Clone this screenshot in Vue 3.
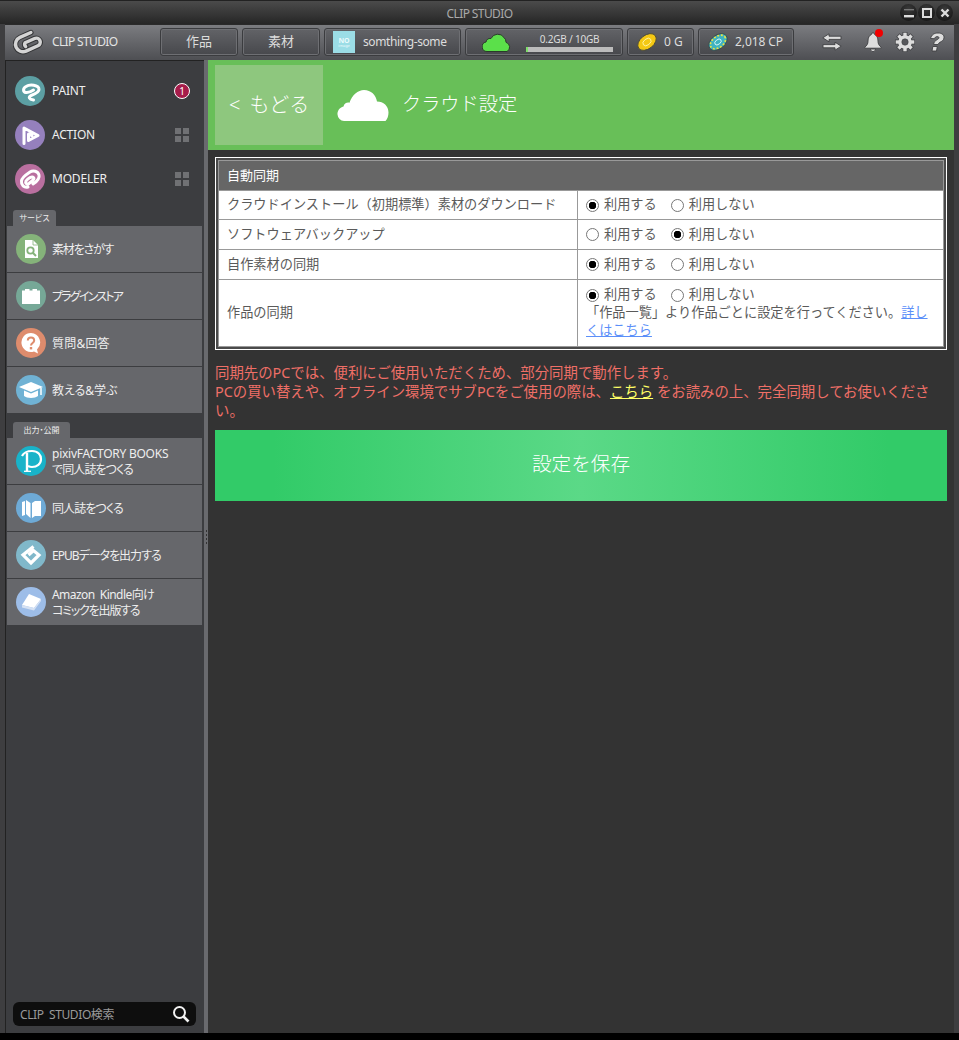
<script setup>
const apps = [
  { id: 'paint', name: 'PAINT', color: '#5c9fa3', badge: true },
  { id: 'action', name: 'ACTION', color: '#9580bd' },
  { id: 'modeler', name: 'MODELER', color: '#b96f9f' }
]
const services = [
  { id: 'find', color: '#85b37a', lines: [{ t: '素材をさがす', c: 'ls-12' }] },
  { id: 'plugin', color: '#76a897', lines: [{ t: 'プラグインストア', c: 'ls-18' }] },
  { id: 'qa', color: '#de8c6d', lines: [{ t: '質問&回答', c: 'ls-p' }] },
  { id: 'learn', color: '#70b2d4', lines: [{ t: '教える&学ぶ', c: 'ls-0' }] }
]
const outputs = [
  { id: 'pixiv', color: '#19b3c9', lines: [{ t: 'pixivFACTORY BOOKS', c: 'ls-2' }, { t: 'で同人誌をつくる', c: 'ls-9' }] },
  { id: 'book', color: '#6eaad6', lines: [{ t: '同人誌をつくる', c: 'ls-9' }] },
  { id: 'epub', color: '#80b8ca', lines: [{ t: 'EPUBデータを出力する', c: 'ls-10' }] },
  { id: 'kindle', color: '#9dbde8', lines: [{ t: 'Amazon\u00a0 Kindle向け', c: 'ls-5' }, { t: 'コミックを出版する', c: 'ls-12' }] }
]
const rows = [
  { label: 'クラウドインストール（初期標準）素材のダウンロード', on: true },
  { label: 'ソフトウェアバックアップ', on: false },
  { label: '自作素材の同期', on: true },
  { label: '作品の同期', on: true, note: true }
]
const teeth = [0, 45, 90, 135, 180, 225, 270, 315]
</script>

<template>
  <div class="window">
    <div class="titlebar">
      <span class="title">CLIP STUDIO</span>
      <div class="winbtns">
        <span class="winbtn"><svg width="12" height="12" viewBox="0 0 12 12"><rect x="1" y="8" width="10" height="2.4" fill="#ddd"/><rect x="1" y="2" width="10" height="1.4" fill="#777"/></svg></span>
        <span class="winbtn"><svg width="12" height="12" viewBox="0 0 12 12"><rect x="2" y="2" width="8" height="8" fill="none" stroke="#ddd" stroke-width="2"/></svg></span>
        <span class="winbtn"><svg width="12" height="12" viewBox="0 0 12 12"><path d="M2.500 2.500l7 7M9.500 2.500l-7 7" stroke="#ddd" stroke-width="2.400"/></svg></span>
      </div>
    </div>

    <div class="toolbar">
      <div class="brand">
        <svg class="logo" width="30" height="26" viewBox="-15 -13 30 26" fill="none" stroke-linecap="round">
          <g transform="rotate(-24)">
            <path d="M6.500 -7.500H-5.500A7.500 7.500 0 0 0 -5.500 7.500H7.500A4 4 0 0 0 7.500 -.5H-3A3.200 3.200 0 0 0 -4 3.200" stroke="#343537" stroke-width="5.400"/>
            <path d="M6.500 -7.500H-5.500A7.500 7.500 0 0 0 -5.500 7.500H7.500A4 4 0 0 0 7.500 -.5H-3A3.200 3.200 0 0 0 -4 3.200" stroke="#d4d4d4" stroke-width="3.400"/>
          </g>
        </svg>
        <span class="brandname">CLIP STUDIO</span>
      </div>
      <div class="tab tab-nav">作品</div>
      <div class="tab tab-nav">素材</div>
      <div class="tab tab-user">
        <span class="avatar"><b>NO</b><i>image</i></span>
        <span class="username">somthing-some</span>
      </div>
      <div class="tab tab-cloud">
        <svg width="30" height="20" viewBox="0 0 30 20"><path d="M5 19.500a4.800 4.800 0 0 1-1-9.500 4.500 4.500 0 0 1 5-3.500 7.500 7.500 0 0 1 13-1 6 6 0 0 1 2 4.800 5 5 0 0 1 1 9.200z" fill="#5be04a" stroke="#2b3b2b" stroke-width="1"/></svg>
        <div class="storage">
          <span class="storage-text">0.2GB / 10GB</span>
          <span class="storage-bar"><span class="storage-used"></span></span>
        </div>
      </div>
      <div class="tab tab-coin">
        <svg width="20" height="20" viewBox="-11 -11 22 22"><ellipse rx="11.500" ry="7.500" transform="rotate(-38)" fill="#f4c814" stroke="#4a4a3a" stroke-width="1"/><ellipse rx="5" ry="3.400" transform="rotate(-38)" fill="none" stroke="#fff3a0" stroke-width="1"/></svg>
        <span>0 G</span>
      </div>
      <div class="tab tab-cp">
        <svg width="20" height="20" viewBox="-11 -11 22 22"><ellipse rx="11.500" ry="7.500" transform="rotate(-38)" fill="#3fb3c0" stroke="#3a4a4a" stroke-width="1"/><ellipse rx="9.500" ry="6" transform="rotate(-38)" fill="none" stroke="#f1e23c" stroke-width="1.800" stroke-dasharray="2 2"/><ellipse rx="4" ry="2.600" transform="rotate(-38)" fill="none" stroke="#d9f6f8" stroke-width="1"/></svg>
        <span>2,018 CP</span>
      </div>
      <div class="tools">
        <svg class="tool-arrows" width="20" height="18" viewBox="0 0 20 18"><path d="M7 .8.800 4.800 7 8.800V6.400h12v-3.200H7zM13 9.200l6.200 4-6.200 4v-2.400H1v-3.200h12z" fill="#ddd" stroke="#3e3f42" stroke-width=".9"/></svg>
        <span class="bell-wrap">
          <svg width="18" height="20" viewBox="0 0 18 20"><path d="M9 .8a1.500 1.500 0 0 1 1.500 1.600C13 3.400 14 6 14 9c0 3 1 4.500 3.200 6.200v1H.8v-1C3 13.500 4 12 4 9c0-3 1-5.600 3.500-6.600A1.500 1.500 0 0 1 9 .8zM6.400 17h5.200a2.600 2.600 0 0 1-5.200 0z" fill="#ddd" stroke="#3e3f42" stroke-width=".9"/></svg>
          <span class="bell-dot"></span>
        </span>
        <svg class="tool-gear" width="20" height="20" viewBox="-10 -10 20 20">
          <g fill="#3e3f42"><rect v-for="a in teeth" :key="a" x="-2.400" y="-10" width="4.800" height="6" :transform="`rotate(${a})`"/></g>
          <circle r="7.400" fill="#3e3f42"/>
          <g fill="#ddd"><rect v-for="a in teeth" :key="a" x="-1.700" y="-9.300" width="3.400" height="5" :transform="`rotate(${a})`"/></g>
          <circle r="6.800" fill="#ddd"/>
          <circle r="3.200" fill="#55565a" stroke="#3e3f42" stroke-width=".6"/>
        </svg>
        <svg class="tool-help" width="20" height="20" viewBox="0 0 20 20"><path d="M4.500 6.500C5.500 2.500 8.500 1 12 1c4 0 6.500 2 6 5-.4 2.300-2.200 3.300-4 4.300-1 .6-1.600 1.100-1.900 2.200H7.600c.3-2.600 1.600-3.700 3.300-4.700 1-.6 1.900-1.100 2-1.900.1-.8-.6-1.300-1.700-1.300-1.400 0-2.200.7-2.700 2.100zM6.800 14.500h4.500L10.500 19H6z" fill="#ddd" stroke="#3e3f42" stroke-width=".9"/></svg>
      </div>
    </div>

    <div class="body">
      <aside class="sidebar">
        <div class="apps">
          <div v-for="a in apps" :key="a.id" class="app">
            <span class="circle" :style="{ background: a.color }">
              <svg width="30" height="30" viewBox="-15 -15 30 30" fill="none" stroke="#fff" stroke-width="3" stroke-linecap="round" stroke-linejoin="round">
                <path v-if="a.id === 'paint'" d="M3.500 9C-1 8-2 6 1 4.500 5 3 9.500 1 9-2 8.500-6 0-7-4-4.500-7.500-2.500-7 1-4 1.500-1 2 2 0 3.500-1"/>
                <path v-else-if="a.id === 'action'" d="M-6 8.500V-7L8 .5-1.500 5.500V-1L2 .5"/>
                <path v-else d="M-2 8C-6 9-9 6-8.500 2-8-2-3-5 0-7 3-9 8-8 9-4 10 0 6 3 3 5M-4 2C-2-1 2-3 3.500-1.500 5 0 2 2-1 4.500-3 6-5 4-4 2"/>
              </svg>
            </span>
            <span class="app-name">{{ a.name }}</span>
            <span v-if="a.badge" class="badge">1</span>
            <span v-else class="grid"><i></i><i></i><i></i><i></i></span>
          </div>
        </div>

        <div class="section">
          <div class="sectab">サービス</div>
          <div class="panel">
            <div v-for="s in services" :key="s.id" class="item">
              <span class="circle" :style="{ background: s.color }">
                <svg v-if="s.id === 'find'" width="18" height="20" viewBox="0 0 18 20"><path d="M3 1h8l5 5v13H3z" fill="#fff"/><path d="M11 1v5h5" fill="none" stroke="#85b37a" stroke-width=".8"/><circle cx="8.500" cy="11.500" r="3.200" fill="none" stroke="#85b37a" stroke-width="1.800"/><path d="M11 14l3 3" stroke="#85b37a" stroke-width="2"/></svg>
                <svg v-else-if="s.id === 'plugin'" width="20" height="16" viewBox="0 0 20 16"><path d="M1 2.500h3V1h4.500v1.500h3V1H16v1.500h3V16H1z" fill="#fff"/></svg>
                <svg v-else-if="s.id === 'qa'" width="22" height="22" viewBox="0 0 22 22"><path d="M11 1a9.500 9.500 0 1 0 3 18.500l4 2-1-4A9.500 9.500 0 0 0 11 1z" fill="#fff"/><path d="M7.800 8.500c0-4 6.400-4 6.400 0 0 2.500-3.200 2.500-3.200 5" fill="none" stroke="#de8c6d" stroke-width="2"/><rect x="9.800" y="15" width="2.400" height="2.400" fill="#de8c6d"/></svg>
                <svg v-else width="24" height="18" viewBox="0 0 24 18"><path d="M12 1 24 6l-12 5L0 6z" fill="#fff"/><path d="M5 9.500l7 3 7-3V15c-3 2.500-11 2.500-14 0z" fill="#fff"/><path d="M22 7v7" stroke="#fff" stroke-width="1.500"/></svg>
              </span>
              <span class="lines"><span v-for="l in s.lines" :key="l.t" :class="l.c">{{ l.t }}</span></span>
            </div>
          </div>
        </div>

        <div class="section">
          <div class="sectab sectab-wide">出力・公開</div>
          <div class="panel">
            <div v-for="s in outputs" :key="s.id" class="item">
              <span class="circle" :style="{ background: s.color }">
                <svg width="30" height="30" viewBox="-15 -15 30 30" fill="none" stroke="#fff">
                  <g v-if="s.id === 'pixiv'">
                    <path d="M-9-5C-7-9-3-10 1-10 7-10 10-6 10-2 10 3 6 6 1 6-1 6-2 5.500-3 5" stroke-width="2.200"/>
                    <path d="M-4-8V10" stroke-width="2.400"/>
                    <path d="M-7 10.300H0" stroke-width="1.300"/>
                  </g>
                  <g v-else-if="s.id === 'book'" fill="#fff" stroke="none">
                    <path d="M-9-6-6-7V7L-9 8zM-5-8-.5-5V10L-5 6z"/>
                    <path d="M1-5 4-7H10V8H4L1 10z"/>
                  </g>
                  <path v-else-if="s.id === 'epub'" d="M2.500-8.500-8 0 0 8 8 0 2.500-4.500-2.500 0" stroke-width="3.200"/>
                  <g v-else stroke="none">
                    <path d="M-2-8 10-3 3 6-9 3z" fill="#fff"/>
                    <path d="M-9 3 3 6 10-3V-1L3 8.500-9 5.500z" fill="#d5e1f3"/>
                  </g>
                </svg>
              </span>
              <span class="lines"><span v-for="l in s.lines" :key="l.t" :class="l.c">{{ l.t }}</span></span>
            </div>
          </div>
        </div>

        <div class="search">
          <span>CLIP&nbsp; STUDIO検索</span>
          <svg width="18" height="18" viewBox="0 0 18 18" fill="none" stroke="#f2f2f2"><circle cx="7.500" cy="7.500" r="5.500" stroke-width="2"/><path d="M11.500 11.500l5 5" stroke-width="2.600"/></svg>
        </div>
      </aside>

      <div class="splitter"><span class="grip"></span></div>

      <main class="main">
        <header class="head">
          <div class="back"><span>&lt; もどる</span></div>
          <svg class="head-cloud" width="52" height="31" viewBox="0 0 52 31"><path d="M7 31A7 7 0 0 1 .5 24.500C.2 21 2.500 17.500 6.500 16.500 7 13.500 10 12 12.500 12.700 15 5 21 0 27 0c7 0 12 5 13 11.500 6.500 0 11.500 4.500 11.500 11 0 3-1 6.500-3 8.500z" fill="#fff"/></svg>
          <h1 class="head-title">クラウド設定</h1>
        </header>

        <div class="content">
          <div class="tablebox">
            <table class="settings">
              <colgroup><col class="col-label"><col></colgroup>
              <thead>
                <tr><th colspan="2">自動同期</th></tr>
              </thead>
              <tbody>
                <tr v-for="r in rows" :key="r.label" :class="{ tall: r.note }">
                  <td class="c-label">{{ r.label }}</td>
                  <td class="c-opt">
                    <div class="opts">
                      <span class="opt"><i class="radio" :class="{ checked: r.on }"></i>利用する</span>
                      <span class="opt"><i class="radio" :class="{ checked: !r.on }"></i>利用しない</span>
                    </div>
                    <div v-if="r.note" class="note">「作品一覧」より作品ごとに設定を行ってください。<a class="lnk">詳しくはこちら</a></div>
                  </td>
                </tr>
              </tbody>
            </table>
          </div>

          <p class="warn">同期先のPCでは、便利にご使用いただくため、部分同期で動作します。<br>PCの買い替えや、オフライン環境でサブPCをご使用の際は、<a class="ylnk">こちら</a> をお読みの上、完全同期してお使いください。</p>

          <div class="save"><span>設定を保存</span></div>
        </div>
      </main>
    </div>
    <div class="bottom"></div>
  </div>
</template>

<style>
html, body { margin: 0; background: #000; }
</style>

<style scoped>
.window {
  width: 959px;
  height: 1040px;
  display: flex;
  flex-direction: column;
  background: #3e3e40;
  font-family: "Noto Sans", "Noto Sans CJK JP", sans-serif;
  overflow: hidden;
}
.titlebar {
  position: relative;
  height: 24px;
  flex: none;
  display: flex;
  align-items: center;
  justify-content: center;
  background: linear-gradient(#4b4b4b, #262626);
  box-sizing: border-box;
  border-top: 1px solid #222;
}
.title { font-size: 12px; color: #a9a9a9; letter-spacing: -.6px; padding-top: 1px; }
.winbtns {
  position: absolute;
  right: 6px;
  top: 3px;
  display: flex;
  gap: 1px;
}
.winbtn {
  width: 17px;
  height: 17px;
  border-radius: 50%;
  background: radial-gradient(circle at 50% 30%, #3a3a3a, #111);
  display: flex;
  align-items: center;
  justify-content: center;
}
.toolbar {
  height: 36px;
  flex: none;
  margin: 0 5px;
  box-sizing: border-box;
  padding: 3px 0 4px;
  display: flex;
  gap: 4px;
  background: linear-gradient(#7b7c80, #4e4f53);
  border-top: 1px solid #2a2a2a;
  color: #ddd;
}
.brand {
  width: 151px;
  display: flex;
  align-items: center;
  flex: none;
  padding-left: 8px;
  box-sizing: border-box;
}
.logo { flex: none; }
.brandname { margin-left: 9px; font-size: 12px; letter-spacing: -.65px; color: #e4e4e4; padding-bottom: 2px; }
.tab {
  box-sizing: border-box;
  height: 28px;
  border: 1px solid #3b3c3f;
  box-shadow: inset 0 0 0 1px #6e6f73;
  border-radius: 3px;
  background: linear-gradient(#626367, #47484c);
  display: flex;
  align-items: center;
  font-size: 12px;
  flex: none;
}
.tab > span { padding-bottom: 2px; }
.tab-nav { width: 78px; justify-content: center; font-size: 13px; padding-bottom: 3px; }
.tab-user { width: 137px; padding-left: 8px; gap: 8px; }
.username { letter-spacing: -.4px; }
.avatar {
  width: 22px;
  height: 22px;
  background: #9bdde6;
  display: flex;
  flex-direction: column;
  align-items: center;
  justify-content: center;
  line-height: 1;
  color: #eafafc;
}
.tab > .avatar { padding-bottom: 0; }
.avatar b { font-size: 7px; font-weight: 700; }
.avatar i { font-size: 4px; font-style: normal; }
.tab-cloud { width: 158px; padding-left: 16px; gap: 14px; }
.storage { display: flex; flex-direction: column; align-items: center; width: 87px; }
.storage-text { font-size: 10px; line-height: 13px; letter-spacing: -.2px; }
.storage-bar { width: 87px; height: 5px; background: #bcbcbc; margin-top: 1px; display: block; }
.storage-used { display: block; width: 2px; height: 5px; background: #7fe06a; }
.tab-coin { width: 67px; padding-left: 9px; gap: 7px; }
.tab-cp { width: 96px; padding-left: 9px; gap: 7px; letter-spacing: -.1px; }
.tools {
  flex: 1;
  display: flex;
  align-items: center;
  padding-left: 24px;
}
.tool-arrows { margin-right: 22px; }
.bell-wrap { position: relative; display: flex; margin-right: 13px; }
.bell-dot {
  position: absolute;
  top: -3px;
  right: -1px;
  width: 8px;
  height: 8px;
  border-radius: 50%;
  background: #f10000;
}
.tool-gear { flex: none; }
.tool-help { margin-left: 11px; flex: none; }
.body {
  flex: 1;
  min-height: 0;
  display: flex;
  margin: 0 5px;
}
.sidebar {
  width: 199px;
  flex: none;
  display: flex;
  flex-direction: column;
  background: #3c3d40;
  box-sizing: border-box;
  box-shadow: inset 1px 1px 0 #222;
}
.apps { padding-top: 9px; }
.app {
  height: 44px;
  display: flex;
  align-items: center;
  padding: 0 15px 0 10px;
  color: #eee;
}
.circle {
  width: 30px;
  height: 30px;
  border-radius: 50%;
  flex: none;
  display: flex;
  align-items: center;
  justify-content: center;
}
.app-name { margin-left: 7px; font-size: 12px; flex: 1; letter-spacing: -.2px; padding-bottom: 2px; }
.badge {
  width: 16px;
  height: 16px;
  border-radius: 50%;
  background: #a61c4a;
  border: 1px solid #fff;
  box-sizing: border-box;
  color: #fff;
  font-size: 10px;
  display: flex;
  align-items: center;
  justify-content: center;
  margin-right: -1px;
}
.grid {
  width: 14px;
  height: 14px;
  display: grid;
  grid-template-columns: 6px 6px;
  grid-template-rows: 6px 6px;
  gap: 2px;
}
.grid i { background: #707174; }
.section { margin-top: 9px; }
.sectab {
  width: 43px;
  height: 16px;
  margin-left: 8px;
  background: #66676b;
  border-radius: 3px 3px 0 0;
  color: #eee;
  font-size: 8px;
  line-height: 16px;
  text-align: center;
  font-feature-settings: "palt";
}
.sectab-wide { width: 57px; }
.panel {
  margin: 0 2px;
  background: #3c3d40;
  display: flex;
  flex-direction: column;
  gap: 1px;
}
.item {
  height: 46px;
  background: #66676b;
  display: flex;
  align-items: center;
  padding-left: 9px;
  gap: 6px;
  color: #eee;
}
.lines {
  display: flex;
  flex-direction: column;
  font-size: 12px;
  line-height: 16px;
  padding-top: 2px;
  font-feature-settings: "palt";
}
.ls-p { letter-spacing: .2px; }
.ls-0 { letter-spacing: 0; }
.ls-2 { letter-spacing: -.25px; }
.ls-5 { letter-spacing: -.55px; }
.ls-9 { letter-spacing: -.9px; }
.ls-10 { letter-spacing: -1px; }
.ls-12 { letter-spacing: -1.2px; }
.ls-18 { letter-spacing: -1.8px; }
.search {
  margin: auto 8px 7px;
  height: 24px;
  border-radius: 6px;
  background: #0e0e0e;
  color: #9a9a9a;
  font-size: 12px;
  display: flex;
  align-items: center;
  justify-content: space-between;
  padding: 0 6px 0 7px;
  letter-spacing: -.4px;
}
.splitter {
  width: 4px;
  flex: none;
  background: #696a6e;
  display: flex;
  align-items: center;
  justify-content: center;
}
.grip {
  width: 1px;
  height: 14px;
  margin-top: -20px;
  background: repeating-linear-gradient(#333 0 2px, transparent 2px 4px);
}
.main {
  flex: 1;
  min-width: 0;
  background: #333;
  display: flex;
  flex-direction: column;
}
.head {
  height: 90px;
  flex: none;
  background: #68bf58;
  box-sizing: border-box;
  padding: 5px 7px;
  display: flex;
  align-items: center;
  color: #fff;
}
.back {
  width: 108px;
  height: 80px;
  background: #8ec77e;
  display: flex;
  align-items: center;
  padding-left: 14px;
  box-sizing: border-box;
  font-size: 20px;
  font-weight: 300;
  white-space: nowrap;
}
.back span { padding-bottom: 4px; word-spacing: 4px; }
.head-cloud { margin-left: 14px; }
.head-title {
  margin: 0 0 0 13px;
  font-size: 19.2px;
  font-weight: 300;
  padding-bottom: 4px;
}
.content { padding: 7px; }
.tablebox {
  border: 1px solid #fff;
  padding: 2px;
  background: #4a4a4a;
}
.settings {
  width: 100%;
  border-collapse: collapse;
  border: 1px solid #999;
  background: #fff;
  table-layout: fixed;
  color: #5a5a5a;
  font-size: 13.2px;
}
.col-label { width: 359px; }
.settings th {
  height: 30px;
  box-sizing: border-box;
  padding: 0 8px 3px;
  background: #666;
  color: #fff;
  font-size: 13px;
  font-weight: 400;
  text-align: left;
  border: 1px solid #999;
}
.settings td {
  height: 30px;
  border: 1px solid #999;
  box-sizing: border-box;
  padding: 0 8px 2px;
  line-height: 18px;
}
.settings tbody tr:first-child td { height: 29px; }
.opts { display: flex; gap: 14px; }
.opt { display: flex; align-items: center; gap: 5px; }
.radio {
  width: 13px;
  height: 13px;
  border-radius: 50%;
  border: 1px solid #777;
  box-sizing: border-box;
  background: #fff;
  display: block;
  flex: none;
  margin-top: 2px;
}
.radio.checked { background: radial-gradient(circle, #000 0 3.500px, #fff 4px); }
.settings .tall td { height: 67px; }
.settings .tall .c-opt { padding-top: 5px; padding-bottom: 7px; }
.lnk { color: #5b8ff9; text-decoration: underline; }
.warn {
  margin: 13px 0 0;
  color: #ef6f67;
  font-size: 14.4px;
  line-height: 19px;
}
.ylnk { color: #ffff66; text-decoration: underline; }
.save {
  margin-top: 10px;
  height: 71px;
  background: linear-gradient(90deg, #32cb68 8%, #5bd987 50%, #32cb68 92%);
  color: #fff;
  font-size: 19.6px;
  font-weight: 300;
  display: flex;
  align-items: center;
  justify-content: center;
}
.save span { padding-bottom: 6px; }
.bottom { height: 7px; flex: none; background: #000; }
</style>
